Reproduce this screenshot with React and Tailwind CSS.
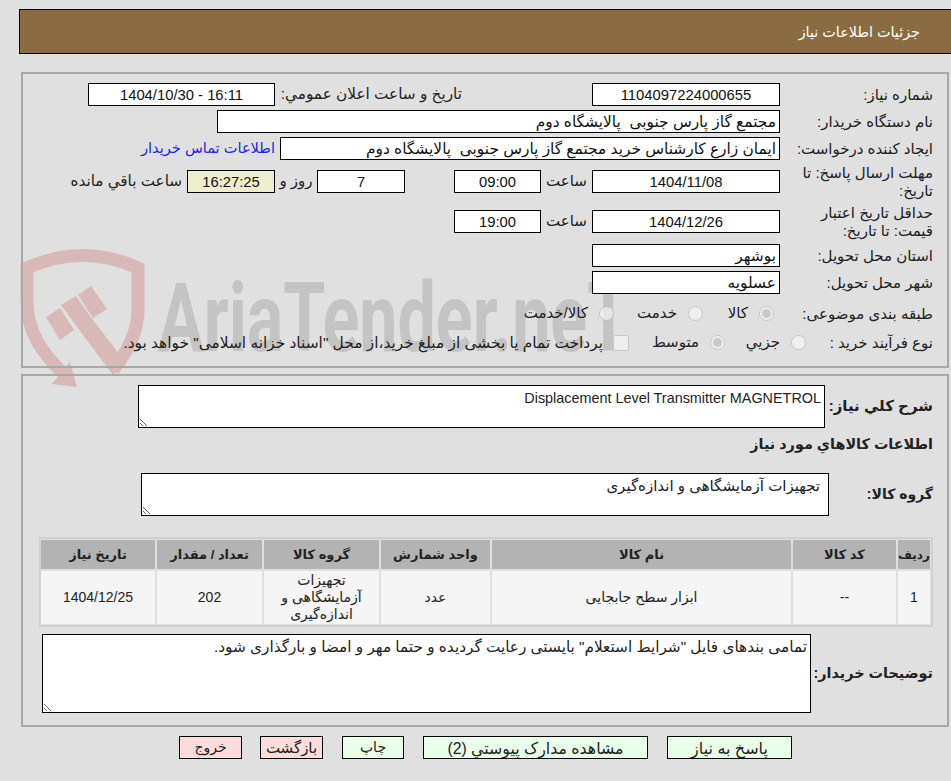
const font = { fontFamily: '"Liberation Sans", "DejaVu Sans", sans-serif' }

function Field({ value, className = '', bg = 'bg-white', size = 'text-[15.4px]', dir = 'rtl' }) {
  return (
    <input readOnly value={value} dir={dir}
      className={`h-[23px] border border-black ${bg} px-[3px] ${size} text-[#111] outline-none ${className}`} />
  )
}

function Label({ children, width = 'w-[153px]' }) {
  return <div className={`${width} shrink-0 text-[15px] leading-[18px] text-[#222]`}>{children}</div>
}

function Box({ value, className = '' }) {
  return (
    <textarea readOnly defaultValue={value} dir="rtl"
      className={`block border border-black bg-white px-[3px] pb-0 pt-[2px] leading-[20px] text-[#222] outline-none ${className}`} />
  )
}

function Radio({ checked, name, label, className = '', labelClass = '' }) {
  return (
    <label className={`flex items-center ${className}`}>
      <input type="radio" disabled name={name} defaultChecked={checked} className="m-0 h-[15px] w-[15px]" />
      <span className={`text-[15px] text-[#222] ${labelClass}`}>{label}</span>
    </label>
  )
}

function Watermark() {
  return (
    <div className="absolute left-0 top-0 z-0 h-[400px] w-[700px] overflow-hidden">
      <svg width="160" height="400" className="absolute left-0 top-0">
        <path d="M66 376C40 352 27 330 27 300L27 268Q83 243 138 268L138 310C138 335 125 355 113 370" fill="none" stroke="#d9b8b8" strokeWidth="13" />
        <polygon points="70,362 77,387 52,384" fill="#d9b8b8" />
        <polygon points="46,317 60,308 74,330 60,340" fill="#d9b8b8" />
        <polygon points="61,305 76,296 93,320 125,362 113,375 83,335" fill="#d9b8b8" />
        <polygon points="78,295 91,286 107,309 93,318" fill="#d9b8b8" />
      </svg>
      <div dir="ltr" className="absolute left-[158px] top-[263px] origin-top-left scale-x-[0.71] whitespace-nowrap text-[96px] font-bold leading-[110px] text-[#c4c4c4]"
        style={{ fontFamily: 'Roboto, sans-serif' }}>
        AriaTender.neT
      </div>
    </div>
  )
}

export default function App() {
  const cols = [
    ['w-[32px]', 'ردیف', '1'],
    ['w-[103px]', 'کد کالا', '--'],
    ['w-[299px]', 'نام کالا', 'ابزار سطح جابجایی'],
    ['w-[109px]', 'واحد شمارش', 'عدد'],
    ['w-[115px]', 'گروه کالا', 'تجهیزات آزمایشگاهی و اندازه‌گیری'],
    ['w-[105px]', 'تعداد / مقدار', '202'],
    ['w-[114px]', 'تاریخ نیاز', '1404/12/25'],
  ]

  return (
    <div dir="rtl" style={font} className="relative min-h-[781px] overflow-hidden bg-[#e0e0e0] pt-[9px]">
      <Watermark />
      <div className="relative z-10">
        {/* header */}
        <div className="ml-[19px] flex h-[45px] items-center border-y border-l border-black bg-[#8b6c42] pr-[31px] pt-[2px] text-[14.4px] text-white">
          جزئیات اطلاعات نیاز
        </div>

        {/* details */}
        <div className="ml-[21px] mr-[2px] mt-[18px] h-[296px] border-2 border-[#a8a8a8] pr-[14px] pt-[9px]">
          <div className="flex items-center">
            <Label>شماره نیاز:</Label>
            <Field value="1104097224000655" size="text-[14.8px]" className="w-[188px] text-center" />
            <span className="mr-[130px] w-[182px] text-[15.3px] text-[#222]">تاریخ و ساعت اعلان عمومي:</span>
            <Field value="1404/10/30 - 16:11" dir="ltr" size="text-[14.8px]" className="mr-[5px] w-[187px] text-center" />
          </div>
          <div className="mt-[4px] flex items-center">
            <Label>نام دستگاه خریدار:</Label>
            <Field value="مجتمع گاز پارس جنوبی  پالایشگاه دوم" className="w-[563px]" />
          </div>
          <div className="mt-[4px] flex items-center">
            <Label>ایجاد کننده درخواست:</Label>
            <Field value="ایمان زارع کارشناس خرید مجتمع گاز پارس جنوبی  پالایشگاه دوم" className="w-[500px]" />
            <a href="#" className="mr-[5px] text-[14.6px] text-[#2222ee]">اطلاعات تماس خریدار</a>
          </div>
          <div className="mt-[5px] flex h-[33px] items-center">
            <Label>مهلت ارسال پاسخ: تا تاریخ:</Label>
            <Field value="1404/11/08" size="text-[14.8px]" className="w-[188px] text-center" />
            <span className="w-[51px] text-center text-[15px] text-[#222]">ساعت</span>
            <Field value="09:00" size="text-[14.8px]" className="w-[87px] text-center" />
            <span className="w-[49px]" />
            <Field value="7" size="text-[14.8px]" className="w-[88px] text-center" />
            <span className="w-[42px] text-center text-[15px] text-[#222]">روز و</span>
            <Field value="16:27:25" size="text-[14.8px]" bg="bg-[#eeeecc]" className="w-[88px] text-center" />
            <span className="mr-[5px] text-[15.2px] text-[#222]">ساعت باقي مانده</span>
          </div>
          <div className="mt-[7px] flex h-[33px] items-center">
            <Label>حداقل تاریخ اعتبار قیمت: تا تاریخ:</Label>
            <Field value="1404/12/26" size="text-[14.8px]" className="w-[188px] text-center" />
            <span className="w-[51px] text-center text-[15px] text-[#222]">ساعت</span>
            <Field value="19:00" size="text-[14.8px]" className="w-[87px] text-center" />
          </div>
          <div className="mt-[6px] flex items-center">
            <Label>استان محل تحویل:</Label>
            <Field value="بوشهر" className="w-[188px]" />
          </div>
          <div className="mt-[4px] flex items-center">
            <Label>شهر محل تحویل:</Label>
            <Field value="عسلویه" className="w-[188px]" />
          </div>
          <div className="mt-[8px] flex h-[23px] items-center">
            <Label>طبقه بندی موضوعی:</Label>
            <Radio checked name="kind" label="کالا" className="mr-[6px]" labelClass="mr-[11px] w-[42px]" />
            <Radio name="kind" label="خدمت" className="mr-[3px]" labelClass="mr-[11px] w-[60px]" />
            <Radio name="kind" label="کالا/خدمت" className="mr-[3px]" labelClass="mr-[11px]" />
          </div>
          <div className="mt-[6px] flex h-[23px] items-center">
            <Label width="w-[127px]">نوع فرآیند خرید :</Label>
            <Radio name="proc" label="جزيي" labelClass="mr-[11px] w-[51px]" />
            <Radio checked name="proc" label="متوسط" className="mr-[4px]" labelClass="mr-[11px] w-[56px]" />
            <label className="mr-[14px] flex items-center">
              <input type="checkbox" disabled className="m-0 h-[16px] w-[16px]" />
              <span className="mr-[10px] text-[15.4px] text-[#222]">پرداخت تمام یا بخشی از مبلغ خرید،از محل "اسناد خزانه اسلامی" خواهد بود.</span>
            </label>
          </div>
        </div>

        {/* items */}
        <div className="ml-[21px] mr-[2px] mt-[6px] h-[353px] border-2 border-[#a8a8a8] pr-[14px] pt-[9px]">
          <div className="flex items-center">
            <div className="w-[108px] shrink-0 text-[15px] font-bold text-[#222]">شرح کلي نياز:</div>
            <Box value="Displacement Level Transmitter MAGNETROL" className="h-[43px] w-[687px] text-[14.4px]" />
          </div>
          <div className="mt-[6px] h-[20px] text-[14.4px] font-bold leading-[20px] text-[#222]">اطلاعات کالاهاي مورد نياز</div>
          <div className="mt-[19px] flex items-center">
            <div className="w-[104px] shrink-0 text-[14px] font-bold text-[#222]">گروه کالا:</div>
            <Box value="تجهیزات آزمایشگاهی و اندازه‌گیری" className="h-[43px] w-[688px] pr-[8px] text-[15px]" />
          </div>
          <div className="mt-[21px] flex w-[894px] gap-[2px] border-2 border-[#d0d0d0] p-[1px] text-center text-[#222]">
            {cols.map(c => (
              <div key={c[1]} className={`${c[0]} flex shrink-0 flex-col gap-[2px]`}>
                <div className="flex h-[29px] items-center justify-center whitespace-nowrap bg-[#b3b3b3] text-[13px] font-bold">
                  {c[1] === 'ردیف' ? <span className="text-[12px]">{c[1]}</span> : c[1]}
                </div>
                <div className="flex h-[53px] items-center justify-center bg-[#f5f5f5] px-[3px] text-[14px] leading-[17px]">{c[2]}</div>
              </div>
            ))}
          </div>
          <div className="mt-[7px] flex items-center">
            <div className="w-[122px] shrink-0 whitespace-nowrap text-[14.4px] font-bold text-[#222]">توضیحات خریدار:</div>
            <Box value={'تمامی بندهای فایل "شرایط استعلام" بایستی رعایت گردیده و حتما مهر و امضا و بارگذاری شود.'} className="h-[79px] w-[769px] text-[15.3px]" />
          </div>
        </div>

        {/* actions */}
        <div dir="ltr" className="ml-[179px] mt-[9px] flex items-center text-[#222]">
          <button dir="rtl" className="h-[23px] w-[63px] border border-black bg-[#ffdcdc] text-[14px]">خروج</button>
          <button dir="rtl" className="ml-[18px] h-[23px] w-[63px] border border-black bg-[#ffdcdc] text-[15px]">بازگشت</button>
          <button dir="rtl" className="ml-[19px] h-[23px] w-[62px] border border-black bg-[#eaffea] text-[14px]">چاپ</button>
          <button dir="rtl" className="ml-[19px] h-[23px] w-[225px] border border-black bg-[#eaffea] text-[15.8px]">مشاهده مدارک پیوستي (2)</button>
          <button dir="rtl" className="ml-[19px] h-[23px] w-[125px] border border-black bg-[#eaffea] text-[16px]">پاسخ به نیاز</button>
        </div>
      </div>
    </div>
  )
}
